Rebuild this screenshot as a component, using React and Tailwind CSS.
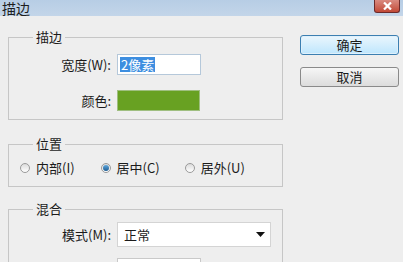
import { useState } from "react";

const font = { fontFamily: '"Noto Sans CJK SC", "Liberation Sans", sans-serif' };

function Radio({ checked, label, onClick }) {
  return (
    <button onClick={onClick} className="flex items-center gap-[6px] text-[13px] leading-[16px] text-[#1b1b1b]">
      <span className="w-[10px] h-[10px] rounded-full border border-[#9a9a9a] bg-gradient-to-b from-[#dcdcdc] to-[#ffffff] flex items-center justify-center">
        {checked && <span className="w-[6px] h-[6px] rounded-full bg-gradient-to-b from-[#5fa8dd] to-[#1d5d93]" />}
      </span>
      {label}
    </button>
  );
}

function Group({ title, className, children }) {
  return (
    <fieldset className={`border border-[#c6c6c6] w-[275px] ${className}`}>
      <legend className="ml-[24px] px-[3px] text-[13px] leading-[16px] text-[#1b1b1b]">{title}</legend>
      {children}
    </fieldset>
  );
}

export default function App() {
  const [pos, setPos] = useState("center");

  return (
    <div className="w-[403px] h-[262px] overflow-hidden bg-[#eeeeee] relative" style={font}>
      {/* title bar */}
      <div className="h-[16px] bg-gradient-to-b from-[#b7cde5] to-[#c3d5e9] flex items-start justify-between">
        <span className="pl-[2px] text-[14px] leading-[16px] text-[#1e1e1e]">描边</span>
        <div className="mr-[3px] w-[26px] h-[13px] rounded-b-[3px] border border-t-0 border-[#6b2a2a] bg-gradient-to-b from-[#d98a80] to-[#c14836] flex items-center justify-center">
          <svg width="9" height="8" viewBox="0 0 9 8">
            <path d="M1 0.5 L8 7.5 M8 0.5 L1 7.5" stroke="#ffffff" strokeWidth="2.2" />
          </svg>
        </div>
      </div>

      <div className="flex">
        <div className="ml-[8px] pt-[13px] flex flex-col">
          <Group title="描边">
            <div className="mt-[9px] flex items-center h-[21px]">
              <span className="w-[102px] text-right text-[13px] text-[#1b1b1b]">宽度(W):</span>
              <div className="ml-[6px] w-[84px] h-[21px] bg-white border border-[#b5c8da] flex items-center pl-[2px]">
                <span className="bg-[#3d8ee0] text-white text-[13px] leading-[15px] px-[1px]">2像素</span>
              </div>
            </div>
            <div className="mt-[15px] mb-[8px] flex items-center h-[21px]">
              <span className="w-[102px] text-right text-[13px] text-[#1b1b1b]">颜色:</span>
              <div className="ml-[6px] w-[83px] h-[21px] bg-[#68a122] border border-[#9fbf80]" />
            </div>
          </Group>

          <Group title="位置" className="mt-[16px]">
            <div className="mt-[8px] mb-[10px] flex items-center h-[16px] pl-[11px]">
              <Radio checked={pos === "inside"} label="内部(I)" onClick={() => setPos("inside")} />
              <div className="ml-[26px]">
                <Radio checked={pos === "center"} label="居中(C)" onClick={() => setPos("center")} />
              </div>
              <div className="ml-[25px]">
                <Radio checked={pos === "outside"} label="居外(U)" onClick={() => setPos("outside")} />
              </div>
            </div>
          </Group>

          <Group title="混合" className="mt-[14px]">
            <div className="mt-[5px] flex items-center h-[25px]">
              <span className="w-[102px] text-right text-[13px] text-[#1b1b1b]">模式(M):</span>
              <div className="ml-[6px] w-[154px] h-[25px] bg-white border border-[#d4d4d4] flex items-center justify-between pl-[6px] pr-[5px]">
                <span className="text-[13px] text-[#1b1b1b]">正常</span>
                <svg width="9" height="5" viewBox="0 0 9 5">
                  <path d="M0 0 H9 L4.5 5 Z" fill="#111111" />
                </svg>
              </div>
            </div>
            <div className="mt-[11px] mb-[8px] flex items-center h-[21px]">
              <span className="w-[102px]" />
              <div className="ml-[6px] w-[84px] h-[21px] bg-white border border-[#c9c9c9]" />
            </div>
          </Group>
        </div>

        <div className="ml-[17px] pt-[19px] flex flex-col gap-[12px]">
          <button className="w-[99px] h-[20px] rounded-[3px] border border-[#3c7fb1] bg-gradient-to-b from-[#eaf6fd] to-[#bee6fd] text-[13px] leading-[18px] text-[#1b1b1b] shadow-[inset_0_0_0_1px_#dff0fb]">
            确定
          </button>
          <button className="w-[99px] h-[20px] rounded-[3px] border border-[#8a8a8a] bg-gradient-to-b from-[#f6f6f6] to-[#dcdcdc] text-[13px] leading-[18px] text-[#1b1b1b]">
            取消
          </button>
        </div>
      </div>
    </div>
  );
}
